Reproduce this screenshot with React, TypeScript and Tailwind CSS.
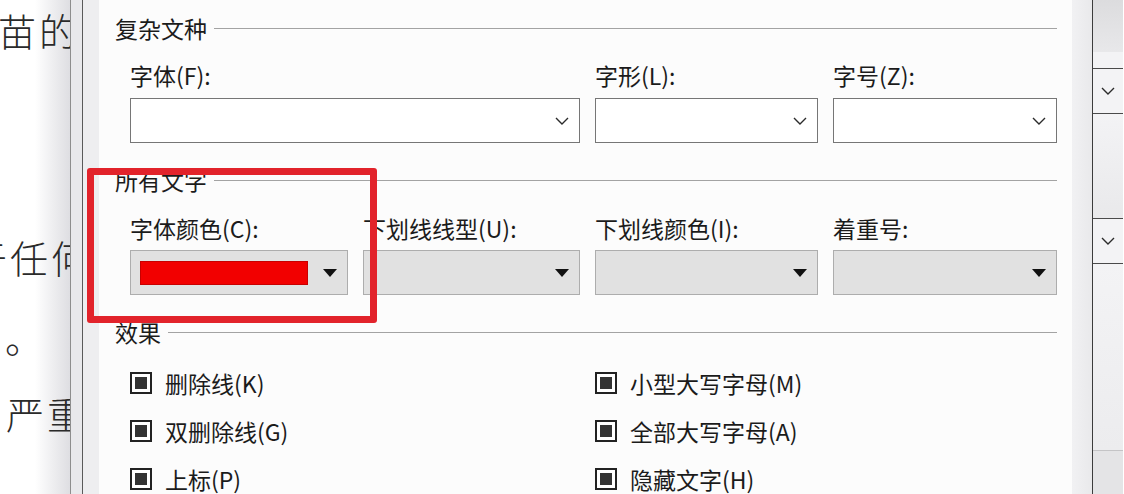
import React from 'react';

const cjk = { fontFamily: '"Noto Sans CJK SC", "Noto Sans", sans-serif' };

function Chevron() {
  return (
    <svg width="14" height="8" viewBox="0 0 14 8" className="shrink-0">
      <path d="M1 1 L7 7 L13 1" fill="none" stroke="#2b2b2b" strokeWidth="1.4" />
    </svg>
  );
}

function Caret() {
  return (
    <svg width="14" height="8" viewBox="0 0 14 8" className="shrink-0">
      <polygon points="0,0 14,0 7,8" fill="#111" />
    </svg>
  );
}

function GroupHeader({ title }: { title: string }) {
  return (
    <div className="flex h-[32px] items-center gap-[7px] pr-[15px]">
      <span className="text-[23px] leading-[32px] text-[#1b1b1b]">{title}</span>
      <div className="h-px flex-1 bg-[#a3a3a3]" />
    </div>
  );
}

function Label({ text }: { text: string }) {
  return <div className="whitespace-nowrap text-[23px] leading-[32px] text-[#1b1b1b]">{text}</div>;
}

function TextCombo({ className = '' }: { className?: string }) {
  return (
    <div className={`flex h-[45px] items-center justify-end border border-[#767676] bg-white pr-[10px] ${className}`}>
      <Chevron />
    </div>
  );
}

function GreyCombo({ swatch }: { swatch?: boolean }) {
  return (
    <div className="flex h-[45px] items-center justify-between border border-[#adadad] bg-[#e1e1e1] pl-[9px] pr-[10px]">
      {swatch ? <div className="h-[24px] w-[168px] border border-[#c80000] bg-[#f20000]" /> : <div />}
      <Caret />
    </div>
  );
}

function Check({ text }: { text: string }) {
  return (
    <div className="flex h-[48px] items-center gap-[13px]">
      <div className="h-[22px] w-[22px] border-2 border-[#222] bg-white p-[3px]">
        <div className="h-full w-full bg-[#333]" />
      </div>
      <span className="whitespace-nowrap text-[23px] text-[#1b1b1b]">{text}</span>
    </div>
  );
}

function RibbonButton() {
  return (
    <div className="flex h-[46px] items-center justify-center border-y border-[#4a4a4a] bg-[#f3f3f5]">
      <Chevron />
    </div>
  );
}

export default function App() {
  return (
    <div className="relative flex h-[494px] w-[1124px] overflow-hidden bg-white" style={cjk}>
      {/* document behind the dialog */}
      <div className="flex w-[70px] shrink-0 flex-col overflow-hidden whitespace-nowrap bg-gradient-to-r from-white via-white to-[#dedee2] text-[38px] font-light leading-[40px] tracking-[3px] text-[#2a2a2a]">
        <div className="mt-[10px] ml-[-2px]">苗的</div>
        <div className="mt-[187px] ml-[-31px]">于任何</div>
        <div className="mt-[40px] ml-[-36px]">了。</div>
        <div className="mt-[36px] ml-[6px]">严重</div>
      </div>
      <div className="w-px shrink-0 bg-[#8e8e8e]" />
      <div className="w-[11px] shrink-0 bg-[#e9e9ec]" />
      <div className="w-px shrink-0 bg-[#5a5a5a]" />
      <div className="w-[16px] shrink-0 bg-[#eeeef0]" />

      {/* dialog content */}
      <div className="flex w-[973px] shrink-0 flex-col bg-[#fcfcfc] pl-[16px]">
        <div className="mt-[12px]">
          <GroupHeader title="复杂文种" />
        </div>
        <div className="ml-[15px] mt-[15px] grid grid-cols-[218px_217px_223px_224px] gap-x-[15px]">
          <div className="col-span-2"><Label text="字体(F):" /></div>
          <Label text="字形(L):" />
          <Label text="字号(Z):" />
          <TextCombo className="col-span-2 mt-[7px]" />
          <TextCombo className="mt-[7px]" />
          <TextCombo className="mt-[7px]" />
        </div>

        <div className="mt-[21px]">
          <GroupHeader title="所有文字" />
        </div>
        <div className="ml-[15px] mt-[16px] grid grid-cols-[218px_217px_223px_224px] gap-x-[15px] gap-y-[6px]">
          <Label text="字体颜色(C):" />
          <Label text="下划线线型(U):" />
          <Label text="下划线颜色(I):" />
          <Label text="着重号:" />
          <GreyCombo swatch />
          <GreyCombo />
          <GreyCombo />
          <GreyCombo />
        </div>

        <div className="mt-[21px]">
          <GroupHeader title="效果" />
        </div>
        <div className="ml-[15px] mt-[11px] grid grid-cols-[465px_1fr]">
          <Check text="删除线(K)" />
          <Check text="小型大写字母(M)" />
          <Check text="双删除线(G)" />
          <Check text="全部大写字母(A)" />
          <Check text="上标(P)" />
          <Check text="隐藏文字(H)" />
        </div>
      </div>

      <div className="w-[20px] shrink-0 bg-gradient-to-r from-[#f1f1f3] to-[#e9e9eb]" />
      <div className="w-px shrink-0 bg-[#3c3c3c]" />

      {/* ribbon edge on the right */}
      <div className="flex w-[30px] shrink-0 flex-col">
        <div className="h-[52px] bg-gradient-to-b from-[#dcdcde] to-[#e8e8ea]" />
        <div className="h-[16px] bg-[#f3f3f5]" />
        <RibbonButton />
        <div className="h-[104px] bg-gradient-to-b from-[#f3f3f5] to-[#e9e9eb]" />
        <RibbonButton />
        <div className="h-[186px] bg-gradient-to-b from-[#f3f3f5] to-[#ececee]" />
        <div className="h-px bg-[#c4c4c6]" />
        <div className="flex-1 bg-[#e4e4e6]" />
      </div>

      {/* highlight frame */}
      <div className="absolute left-[87px] top-[168px] h-[155px] w-[290px] rounded-[3px] border-[7px] border-[#e2232b]" />
    </div>
  );
}
